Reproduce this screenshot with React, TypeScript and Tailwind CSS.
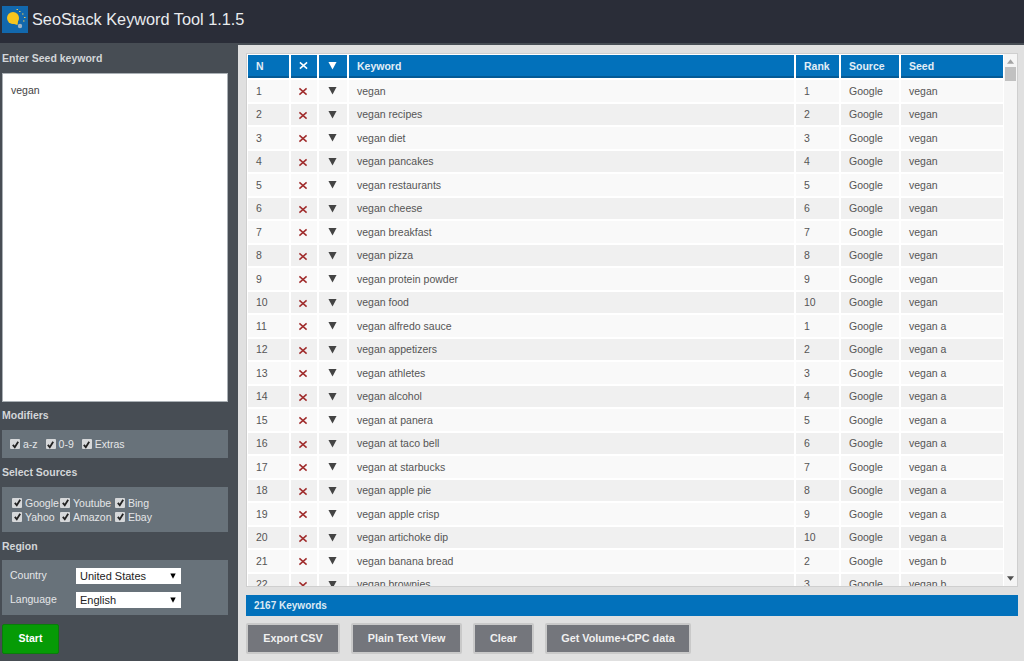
import { ReactNode } from "react";

const font = "font-['Liberation_Sans',Arial,sans-serif]";

// keyword, rank, seed
const rows: [string, number, string][] = [
  ["vegan", 1, "vegan"],
  ["vegan recipes", 2, "vegan"],
  ["vegan diet", 3, "vegan"],
  ["vegan pancakes", 4, "vegan"],
  ["vegan restaurants", 5, "vegan"],
  ["vegan cheese", 6, "vegan"],
  ["vegan breakfast", 7, "vegan"],
  ["vegan pizza", 8, "vegan"],
  ["vegan protein powder", 9, "vegan"],
  ["vegan food", 10, "vegan"],
  ["vegan alfredo sauce", 1, "vegan a"],
  ["vegan appetizers", 2, "vegan a"],
  ["vegan athletes", 3, "vegan a"],
  ["vegan alcohol", 4, "vegan a"],
  ["vegan at panera", 5, "vegan a"],
  ["vegan at taco bell", 6, "vegan a"],
  ["vegan at starbucks", 7, "vegan a"],
  ["vegan apple pie", 8, "vegan a"],
  ["vegan apple crisp", 9, "vegan a"],
  ["vegan artichoke dip", 10, "vegan a"],
  ["vegan banana bread", 2, "vegan b"],
  ["vegan brownies", 3, "vegan b"],
];

const Cross = ({ className }: { className: string }) => (
  <svg viewBox="0 0 10 10" className={className} fill="none" stroke="currentColor" strokeWidth="1.7">
    <path d="M1 1.5 9 8.5M9 1.5 1 8.5" />
  </svg>
);

const Arrow = ({ className }: { className: string }) => (
  <svg viewBox="0 0 10 10" className={className} fill="currentColor">
    <path d="M0.5 1h9L5 9.5z" />
  </svg>
);

const Label = ({ children }: { children: ReactNode }) => (
  <div className="text-[10.5px] leading-[14px] font-bold text-[#d3d6d9]">{children}</div>
);

const Check = ({ label, className = "" }: { label: string; className?: string }) => (
  <label className={`flex items-center text-[10.5px] leading-[14px] whitespace-nowrap text-[#e4e6e8] ${className}`}>
    <span className="mr-[3px] flex h-[10px] w-[10px] shrink-0 items-center justify-center rounded-[1px] bg-[#d6d8da]">
      <svg viewBox="0 0 10 10" className="h-[9px] w-[9px]" fill="none" stroke="#222" strokeWidth="2">
        <path d="M2 5.5 4.2 8 8 2" />
      </svg>
    </span>
    {label}
  </label>
);

const Select = ({ value }: { value: string }) => (
  <div className="flex h-[16px] w-[105px] items-center justify-between bg-white pr-[5px] pl-[4px] text-[11px] text-[#222]">
    <span>{value}</span>
    <Arrow className="h-[6px] w-[6px] text-black" />
  </div>
);

const ActionButton = ({ children, width }: { children: ReactNode; width: string }) => (
  <button className={`h-[31px] rounded-[2px] border-2 border-[#c9c9c9] bg-[#74767c] text-[10.8px] font-bold text-[#f0f0f0] ${width}`}>
    {children}
  </button>
);

const Th = ({ children, className = "" }: { children: ReactNode; className?: string }) => (
  <th className={`h-[23px] border-b-2 border-[#035a96] bg-[#0271bb] p-0 text-left text-[10.5px] font-bold text-[#e3eef6] ${className}`}>
    {children}
  </th>
);

export default function App() {
  return (
    <div className={`flex h-[661px] w-[1024px] flex-col overflow-hidden bg-[#474d54] ${font}`}>
      <header className="flex h-[43px] shrink-0 items-center bg-[#2a2d38] pb-[5px] pl-[2px]">
        <svg viewBox="0 0 26 27" className="h-[27px] w-[26px]">
          <rect width="26" height="27" fill="#1268ad" />
          <circle cx="11" cy="12" r="6" fill="#f7c51e" />
          <path d="M7 16.5 15.5 19 16.5 12z" fill="#f7c51e" />
          <circle cx="18" cy="20" r="2.2" fill="#9fb4c6" />
          <path d="M17 5.5h1.5M20 8h1.5M22 11.5h1.5M21 15h1.5M14.5 3.5h1.5" stroke="#e8c65a" strokeWidth="1.2" />
        </svg>
        <div className="ml-[4px] text-[16.3px] leading-none text-[#e9ebee]">SeoStack Keyword Tool 1.1.5</div>
      </header>

      <div className="flex min-h-0 flex-1">
        <aside className="flex w-[238px] shrink-0 flex-col pr-[10px] pl-[2px]">
          <div className="mt-[8px]"><Label>Enter Seed keyword</Label></div>
          <div className="mt-[8px] h-[329px] border border-[#aab0b5] bg-white px-[8px] py-[10px] text-[10.5px] leading-[12px] text-[#444]">
            vegan
          </div>

          <div className="mt-[6px]"><Label>Modifiers</Label></div>
          <div className="mt-[8px] flex h-[28px] items-center gap-[8px] bg-[#68727a] pl-[8px]">
            <Check label="a-z" />
            <Check label="0-9" />
            <Check label="Extras" />
          </div>

          <div className="mt-[7px]"><Label>Select Sources</Label></div>
          <div className="mt-[8px] grid h-[45px] grid-cols-[48px_55px_60px] content-center bg-[#68727a] pl-[10px]">
            <Check label="Google" />
            <Check label="Youtube" />
            <Check label="Bing" />
            <Check label="Yahoo" />
            <Check label="Amazon" />
            <Check label="Ebay" />
          </div>

          <div className="mt-[7px]"><Label>Region</Label></div>
          <div className="mt-[7px] flex h-[55px] flex-col gap-[8px] bg-[#68727a] pt-[8px] pl-[8px]">
            <div className="flex items-center text-[10.5px] text-[#e4e6e8]">
              <span className="w-[66px]">Country</span>
              <Select value="United States" />
            </div>
            <div className="flex items-center text-[10.5px] text-[#e4e6e8]">
              <span className="w-[66px]">Language</span>
              <Select value="English" />
            </div>
          </div>

          <button className="mt-[9px] h-[30px] w-[57px] rounded-[2px] border border-[#0a7d0a] bg-[#069b06] text-[10.5px] font-bold text-white">
            Start
          </button>
        </aside>

        <main className="mt-[2px] flex min-w-0 flex-1 flex-col bg-[#e0e0e0] pt-[8px] pr-[6px] pl-[8px]">
          <div className="flex h-[534px] overflow-hidden border border-[#cfcfcf] bg-white">
            <div className="min-w-0 flex-1 overflow-hidden">
              <table className="-mt-[1px] -ml-[1px] w-[757px] table-fixed border-separate border-spacing-[2px] text-[10.5px] text-[#555]">
                <colgroup>
                  <col className="w-[41px]" />
                  <col className="w-[26px]" />
                  <col className="w-[28px]" />
                  <col className="w-[445px]" />
                  <col className="w-[43px]" />
                  <col className="w-[58px]" />
                  <col className="w-[102px]" />
                </colgroup>
                <thead>
                  <tr>
                    <Th className="pt-[2px] pl-[8px]">N</Th>
                    <Th className="pr-[2px]"><Cross className="mx-auto h-[9px] w-[9px] text-white" /></Th>
                    <Th className="pr-[2px]"><Arrow className="mx-auto h-[9px] w-[9px] text-white" /></Th>
                    <Th className="pt-[2px] pl-[8px]">Keyword</Th>
                    <Th className="pt-[2px] pl-[8px]">Rank</Th>
                    <Th className="pt-[2px] pl-[8px]">Source</Th>
                    <Th className="pt-[2px] pl-[8px]">Seed</Th>
                  </tr>
                </thead>
                <tbody>
                  {rows.map(([keyword, rank, seed], i) => {
                    const bg = i % 2 === 0 ? "bg-[#f9f9f9]" : "bg-[#f0f0f0]";
                    return (
                      <tr key={i} className="h-[21.5px]">
                        <td className={`${bg} p-0 pt-[2px] pl-[8px]`}>{i + 1}</td>
                        <td className={`${bg} p-0 pr-[2px]`}><Cross className="mx-auto mt-[2px] h-[9px] w-[10px] text-[#a02c2c]" /></td>
                        <td className={`${bg} p-0 pr-[2px]`}><Arrow className="mx-auto h-[9px] w-[9px] text-[#444]" /></td>
                        <td className={`${bg} p-0 pt-[2px] pl-[8px]`}>{keyword}</td>
                        <td className={`${bg} p-0 pt-[2px] pl-[8px]`}>{rank}</td>
                        <td className={`${bg} p-0 pt-[2px] pl-[8px]`}>Google</td>
                        <td className={`${bg} p-0 pt-[2px] pl-[8px]`}>{seed}</td>
                      </tr>
                    );
                  })}
                </tbody>
              </table>
            </div>
            <div className="relative w-[13px] shrink-0 bg-[#f5f5f5]">
              <svg viewBox="0 0 8 8" className="absolute top-[4px] left-[3px] h-[7px] w-[7px] rotate-180" fill="#a3a3a3"><path d="M0 1.5h8L4 6.5z" /></svg>
              <div className="absolute top-[13px] left-[1px] h-[14px] w-[11px] bg-[#c1c1c1]" />
              <svg viewBox="0 0 8 8" className="absolute bottom-[4px] left-[3px] h-[7px] w-[7px]" fill="#505050"><path d="M0 1.5h8L4 6.5z" /></svg>
            </div>
          </div>

          <div className="mt-[8px] flex h-[21px] items-center bg-[#0271bb] pl-[8px] text-[10px] font-bold text-[#dceaf4]">
            2167 Keywords
          </div>

          <div className="mt-[7px] flex gap-[11px]">
            <ActionButton width="w-[94px]">Export CSV</ActionButton>
            <ActionButton width="w-[111px]">Plain Text View</ActionButton>
            <ActionButton width="w-[61px]">Clear</ActionButton>
            <ActionButton width="w-[146px]">Get Volume+CPC data</ActionButton>
          </div>
        </main>
      </div>
    </div>
  );
}
